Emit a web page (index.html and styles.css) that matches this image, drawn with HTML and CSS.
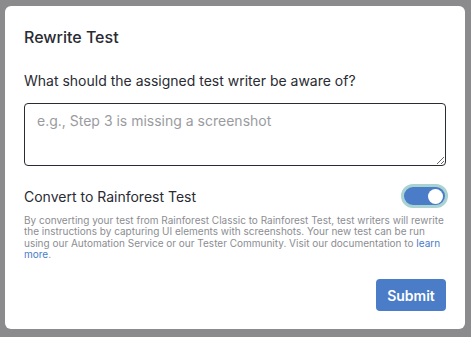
FILE: index.html
```html
<!DOCTYPE html>
<html>
  <head>
  <meta name="viewport" content="width=device-width, initial-scale=1">
  <link rel="stylesheet" href="styles.css">
  </head>
  <body>
    <div class="backdrop">
      <div class="modal">
        <h2 class="modal-title">Rewrite Test</h2>
        <label class="field-label" for="notes">What should the assigned test writer be aware of?</label>
        <textarea id="notes" class="notes" placeholder="e.g., Step 3 is missing a screenshot"></textarea>
        <div class="toggle-row">
          <span class="toggle-label">Convert to Rainforest Test</span>
          <span class="toggle"><span class="knob"></span></span>
        </div>
        <p class="help">By converting your test from Rainforest Classic to Rainforest Test, test writers will rewrite the instructions by capturing UI elements with screenshots. Your new test can be run using our Automation Service or our Tester Community. Visit our documentation to <a href="#">learn more</a>.</p>
        <div class="actions">
          <button class="submit">Submit</button>
        </div>
      </div>
    </div>
  </body>
</html>
```
FILE: styles.css
```css
html, body {
  margin: 0;
  height: 100%;
}
body {
  background-color: #8b8b8e;
  font-family: Inter, "Noto Sans", sans-serif;
  color: #2a2b33;
}
.backdrop {
  padding: 6px 6px 0 5px;
}
.modal {
  background: #fff;
  border-radius: 6px;
  width: 460px;
  height: 323px;
  box-sizing: border-box;
  padding: 21px 19px 0 19px;
  display: flex;
  flex-direction: column;
}
.modal-title {
  margin: 0;
  font-size: 16px;
  font-weight: 500;
  line-height: 20px;
}
.field-label {
  margin-top: 25px;
  font-size: 14px;
  line-height: 18px;
}
.notes {
  margin-top: 13px;
  height: 63px;
  box-sizing: border-box;
  border: 1px solid #2a2b35;
  border-radius: 4px;
  padding: 8px 12px;
  font-family: inherit;
  font-size: 14px;
  resize: vertical;
  outline: none;
}
.notes::placeholder {
  color: #9a9ba0;
}
.toggle-row {
  margin-top: 18px;
  display: flex;
  align-items: center;
  justify-content: space-between;
}
.toggle-label {
  font-size: 14px;
}
.toggle {
  width: 39px;
  height: 18px;
  border-radius: 12px;
  background: #4a7cc7;
  border: 3px solid #a9d3d3;
  margin-right: -2px;
  display: flex;
  align-items: center;
  justify-content: flex-end;
  padding-right: 2px;
  box-sizing: content-box;
}
.knob {
  width: 15px;
  height: 15px;
  border-radius: 50%;
  background: #fff;
}
.help {
  margin: 7px 0 0 0;
  font-size: 10px;
  line-height: 11.3px;
  color: #8c8d92;
}
.help a {
  color: #4a7cc7;
  text-decoration: none;
}
.actions {
  margin-top: 19px;
  display: flex;
  justify-content: flex-end;
}
.submit {
  width: 70px;
  height: 32px;
  background: #4a7cc7;
  color: #fff;
  border: none;
  border-radius: 4px;
  font-family: inherit;
  font-size: 14px;
  font-weight: 600;
}
```
